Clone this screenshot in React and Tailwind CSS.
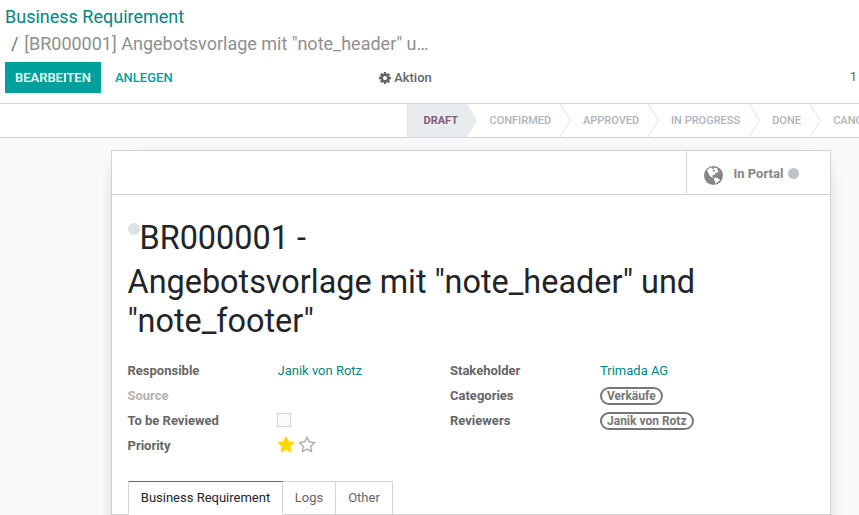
import React from "react";

const COG =
  "M1152 896q0-106-75-181t-181-75-181 75-75 181 75 181 181 75 181-75 75-181zm512-109v222q0 12-8 23t-20 13l-185 28q-19 54-39 91 35 50 107 138 10 12 10 25t-9 23q-27 37-99 108t-94 71q-12 0-26-9l-138-108q-44 23-91 38-16 136-29 186-7 28-36 28h-222q-14 0-24.5-8.5t-11.5-21.5l-28-184q-49-16-90-37l-141 107q-10 9-25 9-14 0-25-11-126-114-165-168-7-10-7-23 0-12 8-23 15-21 51-66.5t54-70.5q-27-50-41-99l-183-27q-13-2-21-12.5t-8-23.5v-222q0-12 8-23t19-13l186-28q14-46 39-92-40-57-107-138-10-12-10-24 0-10 9-23 26-36 98.5-107.5t94.5-71.5q13 0 26 10l138 107q44-23 91-38 16-136 29-186 7-28 36-28h222q14 0 24.5 8.5t11.5 21.5l28 184q49 16 90 37l142-107q9-9 24-9 13 0 25 10 129 119 165 170 7 8 7 22 0 12-8 23-15 21-51 66.5t-54 70.5q26 50 41 98l183 28q13 2 21 12.5t8 23.5z";
const STAR =
  "M1728 647q0 22-26 48l-363 354 86 500q1 7 1 20 0 21-10.5 35.5t-30.5 14.5q-19 0-40-12l-449-236-449 236q-22 12-40 12-21 0-31.5-14.5t-10.5-35.5q0-6 2-20l86-500-364-354q-25-27-25-48 0-37 56-46l502-73 225-455q19-41 49-41t49 41l225 455 502 73q56 9 56 46z";
const STAR_O =
  "M1201 1004l306-297-422-62-189-382-189 382-422 62 306 297-73 421 378-199 377 199zm527-357q0 22-26 48l-363 354 86 500q1 7 1 20 0 50-41 50-19 0-40-12l-449-236-449 236q-22 12-40 12-21 0-31.5-14.5t-10.5-35.5q0-6 2-20l86-500-364-354q-25-27-25-48 0-37 56-46l502-73 225-455q19-41 49-41t49 41l225 455 502 73q56 9 56 46z";

function Icon({ d, className }) {
  return (
    <svg viewBox="0 0 1792 1792" fill="currentColor" className={className}>
      <path d={d} />
    </svg>
  );
}

function Globe() {
  return (
    <svg viewBox="0 0 19 19" className="ml-[17px] mt-[3px] size-[19px] shrink-0">
      <circle cx="9.5" cy="9.5" r="9.5" fill="#868686" />
      <path
        fill="#fff"
        d="M3.2 4.2 4.6 2.8 6.6 1.8 8.6 1.8 8 2.8 9.4 3 10.4 1.8 12.6 2 14 3 12.8 3.8 14.4 5 14.8 6 13.2 6.2 12.2 7 11 7.6 10.4 8.8 9.6 9.6 8.6 9.2 7.6 9.6 8 10.6 9.2 10.6 9.4 11.8 8.2 11.6 6.4 10.4 5 8.8 4.6 7.2 3.6 6z M10.2 12 11.6 11.4 13.2 12 14.4 12.8 16 13.2 15.4 14.6 14 15.8 12.8 16.8 11 17.4 11.2 15.4 10 14z"
      />
      <path fill="#868686" d="M9.4 3.8 11 4.2 10.6 5.6 9.2 5.8 8.6 4.8z" />
    </svg>
  );
}

function Stage({ label, width, active }) {
  return (
    <div className={`relative h-[33px] shrink-0 ${width}`}>
      <svg viewBox="0 0 12 33" className="absolute top-0 -right-[10.5px] z-10 h-[33px] w-3">
        <path
          d="M0 0 10.5 16.5 0 33"
          fill={active ? "#e9ecef" : "#fff"}
          stroke={active ? "none" : "#dee2e6"}
        />
      </svg>
      <div
        className={`flex h-full items-center text-[11px] whitespace-nowrap ${
          active
            ? "border-l border-[#dee2e6] bg-[#e9ecef] pl-[15.5px] font-bold text-[#875a7b]"
            : "pl-[21.5px] font-medium text-[#adb5bd]"
        }`}
      >
        {label}
      </div>
    </div>
  );
}

function Field({ label, muted, children }) {
  return (
    <div className="flex h-[25px] items-center">
      <div className={`w-[150px] shrink-0 font-bold ${muted ? "text-[#b2b2b2]" : "text-[#666]"}`}>{label}</div>
      {children}
    </div>
  );
}

function Tag({ children }) {
  return (
    <span className="flex h-[18px] items-center rounded-full border-2 border-[#777] px-[5px] text-[12px] leading-none font-bold text-[#777]">
      {children}
    </span>
  );
}

export default function App() {
  return (
    <div className="flex h-[515px] w-[859px] flex-col overflow-hidden bg-[#f9f9f9] font-[Roboto,sans-serif] text-[13px] leading-[19.5px] text-[#666]">
      <header className="h-[104px] shrink-0 border-b border-[#ced4da] bg-white pl-[5px]">
        <div className="pt-[3px] text-[18px] leading-[27px] text-[#008784]">Business Requirement</div>
        <div className="flex text-[18px] leading-[27px] whitespace-nowrap text-[#8f8f8f]">
          <span className="w-[19.2px] pl-[6px] text-[#6c757d]">/</span>
          <span>[BR000001] Angebotsvorlage mit "note_header" u…</span>
        </div>
        <div className="mt-[5px] flex h-[31px] items-center font-medium">
          <button className="h-[31px] w-24 bg-[#00a09d] text-white">BEARBEITEN</button>
          <button className="ml-[14px] text-[#00a09d]">ANLEGEN</button>
          <div className="ml-[205px] flex items-center">
            <Icon d={COG} className="mr-[2.5px] size-[14px]" />
            Aktion
          </div>
          <span className="ml-auto pr-[2px] pb-[2px] font-normal">1</span>
        </div>
      </header>

      <div className="flex h-[34px] shrink-0 overflow-hidden border-b border-[#ced4da] bg-white pl-[407px]">
        <Stage label="DRAFT" width="w-[61px]" active />
        <Stage label="CONFIRMED" width="w-[93.5px]" />
        <Stage label="APPROVED" width="w-[88px]" />
        <Stage label="IN PROGRESS" width="w-[101.2px]" />
        <Stage label="DONE" width="w-[61px]" />
        <Stage label="CANCELLED" width="w-[93px]" />
      </div>

      <main className="mt-3 ml-[111px] h-[400px] w-[720px] shrink-0 border border-[#ced4da] bg-white shadow-[0_5px_20px_-15px_#000]">
        <div className="flex h-[44px] justify-end border-b border-[#ced4da]">
          <div className="flex w-[144px] items-center border-l border-[#ced4da] pt-[2px] font-bold text-[#868686]">
            <Globe />
            <span className="ml-[10.5px]">In Portal</span>
            <span className="mb-px ml-[5px] size-[11px] rounded-full bg-[#bdc5cb]" />
          </div>
        </div>

        <div className="pr-4 pl-[15.5px]">
          <h1 className="pt-[20px] text-[32.4px] leading-[39px] text-[#212529]">
            <div className="flex h-[48px] items-center">
              <span className="mb-[20px] size-3 rounded-full bg-[#dee2e6]" />
              <span className="pb-px">BR000001 -</span>
            </div>
            <div>
              Angebotsvorlage mit "note_header" und
              <br />
              "note_footer"
            </div>
          </h1>

          <div className="mt-[17px] flex">
            <div className="w-[322.5px]">
              <Field label="Responsible">
                <span className="text-[#008784]">Janik von Rotz</span>
              </Field>
              <Field label="Source" muted />
              <Field label="To be Reviewed">
                <span className="mb-px -ml-[0.5px] size-[14px] border border-[#d5d5d5] bg-[#fcfcfc]" />
              </Field>
              <Field label="Priority">
                <div className="mb-[2px] -ml-[0.5px] flex gap-[3px]">
                  <Icon d={STAR} className="size-[18px] text-[#ffd700]" />
                  <Icon d={STAR_O} className="size-[18px] text-[#a8a8a8]" />
                </div>
              </Field>
            </div>
            <div>
              <Field label="Stakeholder">
                <span className="text-[#008784]">Trimada AG</span>
              </Field>
              <Field label="Categories">
                <Tag>Verkäufe</Tag>
              </Field>
              <Field label="Reviewers">
                <Tag>Janik von Rotz</Tag>
              </Field>
            </div>
          </div>
        </div>

        <div className="mt-[23px] flex h-[34px] border-b border-[#ced4da] pl-4">
          <div className="-mb-px flex w-[155px] items-center justify-center border border-t-[#875a7b] border-r-[#ced4da] border-b-white border-l-[#ced4da] bg-white text-[#212529]">
            Business Requirement
          </div>
          <div className="flex w-[53px] items-center justify-center border-t border-r border-[#ced4da]">Logs</div>
          <div className="flex w-[57px] items-center justify-center border-t border-r border-[#ced4da]">Other</div>
        </div>
      </main>
    </div>
  );
}
